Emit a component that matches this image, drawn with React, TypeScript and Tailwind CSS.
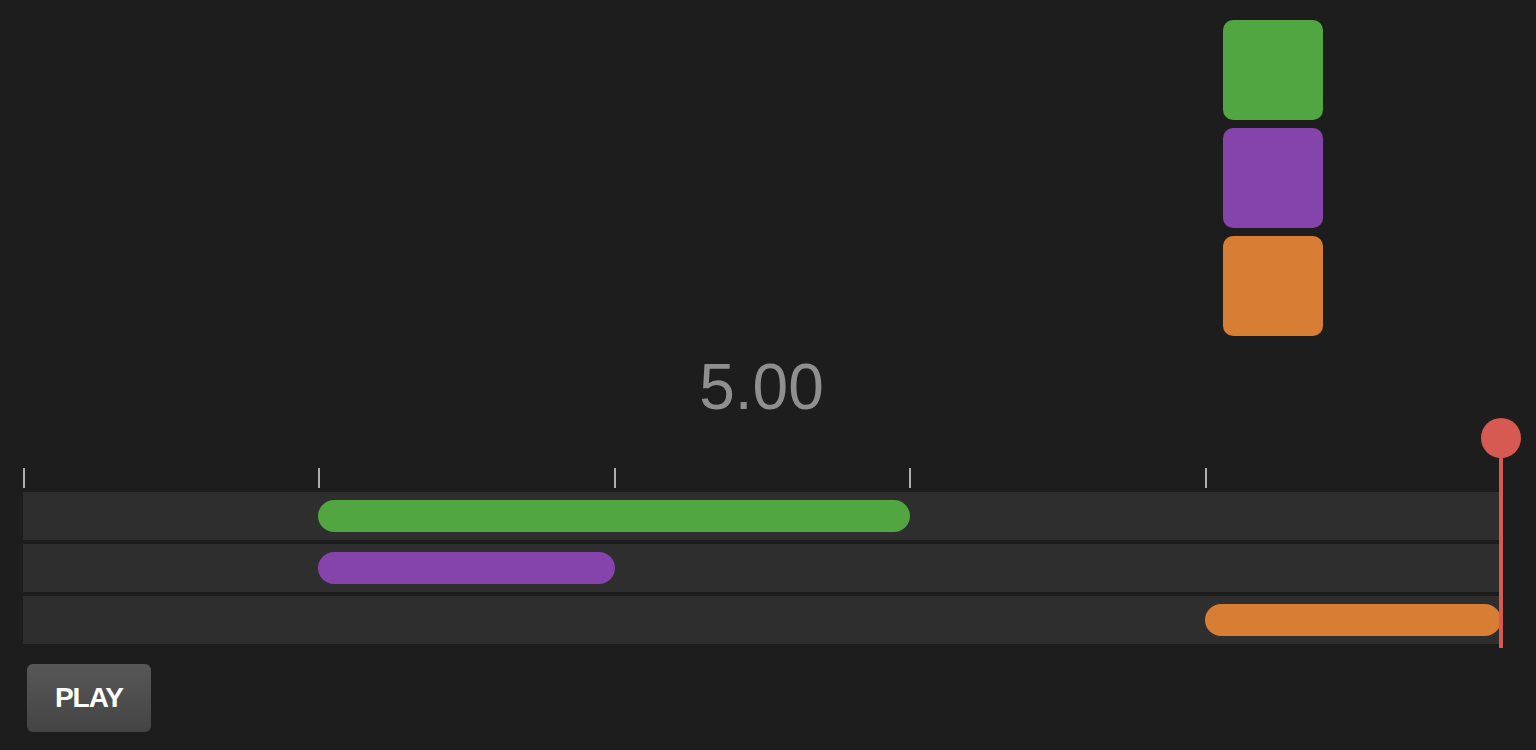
import React from 'react'

const squares = ['bg-[#52a642]', 'bg-[#8444ab]', 'bg-[#d87d34]']

const clips = [
  { color: 'bg-[#52a642]', start: 1, end: 3 },
  { color: 'bg-[#8444ab]', start: 1, end: 2 },
  { color: 'bg-[#d87d34]', start: 4, end: 5 },
]

const ticks = [0, 1, 2, 3, 4, 5]

export default function App() {
  return (
    <div className="h-[750px] w-full overflow-hidden bg-[#1d1d1d] font-['Liberation_Sans',Arial,sans-serif]">
      <div className="flex flex-col gap-2 pl-[1223px] pt-5">
        {squares.map((c) => (
          <div key={c} className={`h-[100px] w-[100px] rounded-[10px] ${c}`} />
        ))}
      </div>

      <div className="ml-[23px] mt-[19px] w-[1477px] text-center text-[64px] leading-none text-[#8f8f8f]">
        5.00
      </div>

      <div className="relative ml-[23px] mt-[49px] w-[1477px]">
        <div className="relative h-5">
          {ticks.map((t) => (
            <div
              key={t}
              className="absolute top-0 h-5 w-[2px] bg-[#adadad]"
              style={{ left: `${(t / 5) * 100}%` }}
            />
          ))}
        </div>

        <div className="mt-1 flex flex-col gap-1">
          {clips.map((clip, i) => (
            <div key={i} className="relative h-12 bg-[#2e2e2e]">
              <div
                className={`absolute top-2 h-8 rounded-full ${clip.color}`}
                style={{
                  left: `${(clip.start / 5) * 100}%`,
                  width: `calc(${((clip.end - clip.start) / 5) * 100}% + 1px)`,
                }}
              />
            </div>
          ))}
        </div>

        {/* playhead */}
        <div className="absolute left-[1458px] top-[-50px] flex w-10 flex-col items-center">
          <div className="h-10 w-10 rounded-full bg-[#d65a52]" />
          <div className="h-[190px] w-1 bg-[#d65a52]" />
        </div>
      </div>

      <button className="ml-[27px] mt-5 flex h-[68px] w-[124px] items-center justify-center rounded-md bg-gradient-to-b from-[#575757] to-[#444444] text-[28px] font-bold tracking-[-1px] text-white">
        PLAY
      </button>
    </div>
  )
}
